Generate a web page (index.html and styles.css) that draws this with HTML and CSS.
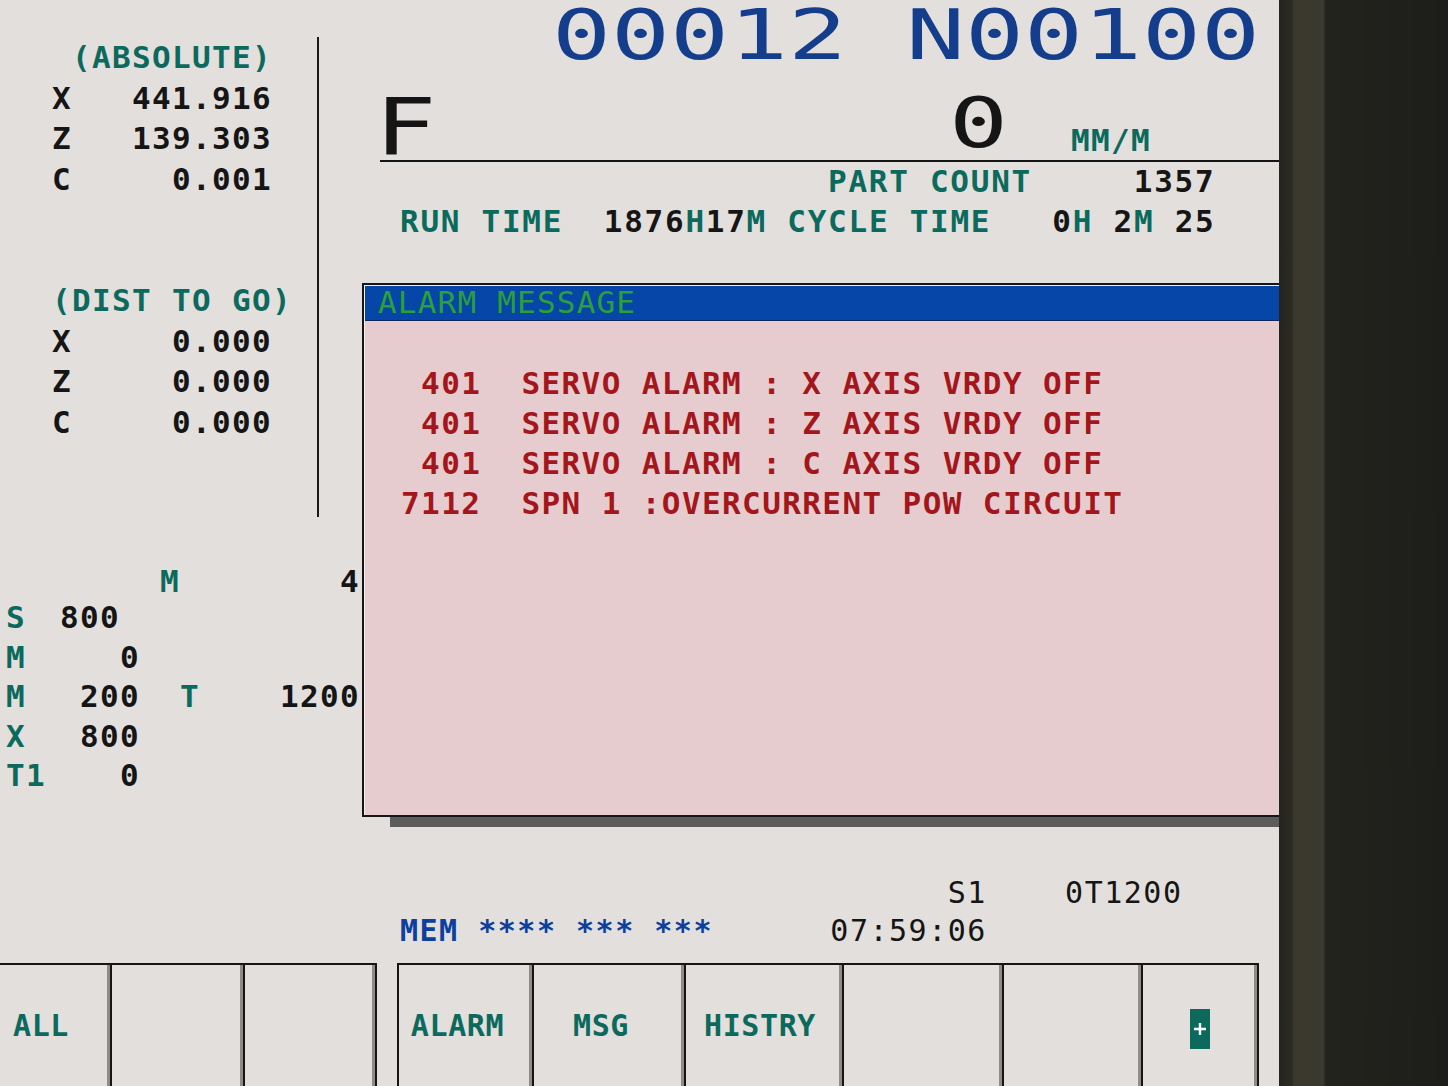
FILE: index.html
```html
<!DOCTYPE html>
<html lang="en">
  <head>
    <meta charset="UTF-8" />
    <title>CNC Alarm Message</title>
    <link rel="stylesheet" href="styles.css">
  </head>
  <body>
    <div class="monitor">
      <div class="screen">
        <div class="upper">
          <div class="left-col">
            <div class="position">
              <div class="pos-line head first"> (ABSOLUTE)</div>
              <div class="pos-line">X   441.916</div>
              <div class="pos-line">Z   139.303</div>
              <div class="pos-line">C     0.001</div>
              <div class="pos-line"> </div>
              <div class="pos-line"> </div>
              <div class="pos-line head">(DIST TO GO)</div>
              <div class="pos-line">X     0.000</div>
              <div class="pos-line">Z     0.000</div>
              <div class="pos-line">C     0.000</div>
            </div>

            <div class="modal">
              <div class="modal-row first"><span class="lbl"></span>     <span class="t">M</span>        4</div>
              <div class="modal-row"><span class="lbl">S</span>800</div>
              <div class="modal-row"><span class="lbl">M</span>   0</div>
              <div class="modal-row"><span class="lbl">M</span> 200  <span class="t">T</span>    1200</div>
              <div class="modal-row"><span class="lbl">X</span> 800</div>
              <div class="modal-row"><span class="lbl">T1</span>   0</div>
            </div>
          </div>

          <div class="right-col">
            <div class="prog"><span class="big">00012 N00100</span></div>

            <div class="feed">
              <div class="feed-f"><span>F</span></div>
              <div class="feed-val"><span class="big dark">0</span></div>
              <div class="feed-unit">MM/M</div>
            </div>

            <div class="counters">
              <div class="count-line">                     <span class="t">PART COUNT</span>     1357</div>
              <div class="count-line"><span class="t">RUN TIME</span>  1876<span class="t">H</span>17<span class="t">M</span> <span class="t">CYCLE TIME</span>   0<span class="t">H</span> 2<span class="t">M</span> 25</div>
            </div>

            <div class="alarm">
              <div class="alarm-inner">
                <div class="alarm-title">ALARM MESSAGE</div>
                <div class="alarm-body">
                  <div class="alarm-line"> 401  SERVO ALARM : X AXIS VRDY OFF</div>
                  <div class="alarm-line"> 401  SERVO ALARM : Z AXIS VRDY OFF</div>
                  <div class="alarm-line"> 401  SERVO ALARM : C AXIS VRDY OFF</div>
                  <div class="alarm-line">7112  SPN 1 :OVERCURRENT POW CIRCUIT</div>
                </div>
              </div>
            </div>
          </div>
        </div>

        <div class="status">
          <div class="status-line">                            S1    0T1200</div>
          <div class="status-line"><span class="mem">MEM **** *** ***</span>      07:59:06</div>
        </div>

        <div class="softkeys">
          <div class="key key-first" style="width: 112px">ALL</div>
          <div class="key" style="width: 133px"></div>
          <div class="key" style="width: 132px"></div>
          <div class="key key-gap" style="width: 137px">ALARM</div>
          <div class="key" style="width: 152px">MSG</div>
          <div class="key key-wide" style="width: 158px">HISTRY</div>
          <div class="key" style="width: 160px"></div>
          <div class="key" style="width: 139px"></div>
          <div class="key key-more" style="width: 116px">
            <span class="plus">
              <svg width="20" height="40" viewBox="0 0 20 40">
                <rect x="0" y="0" width="20" height="40" fill="#0b6a5c"/>
                <path d="M10 14 V26 M4 20 H16" stroke="#ffffff" stroke-width="2.4"/>
              </svg>
            </span>
          </div>
        </div>
      </div>
      <div class="bezel"></div>
    </div>
  </body>
</html>
```

FILE: styles.css
```css
body {
  margin: 0;
  padding: 0;
  background: #1f201b;
  font-family: "DejaVu Sans Mono", "Liberation Mono", monospace;
  color: #151515;
}
.monitor {
  display: flex;
  width: 1448px;
  height: 1086px;
  overflow: hidden;
}
.screen {
  width: 1279px;
  height: 1086px;
  flex: none;
  background: #e2dfdc;
  overflow: hidden;
  display: flex;
  flex-direction: column;
}
.bezel {
  flex: 1;
  background: linear-gradient(to right, #25251f 0, #2b2b24 13px, #3b392e 15px, #3a392f 44px, #22231d 47px, #1d1e19 100%);
}
.t {
  color: #0b6a5d;
}

/* upper area */
.upper {
  height: 826px;
  flex: none;
  display: flex;
}
.left-col {
  width: 362px;
  flex: none;
}
.right-col {
  flex: 1;
  min-width: 0;
}

/* position display */
.position {
  width: 319px;
  box-sizing: border-box;
  margin-top: 45px;
  padding: 0 0 75px 52px;
  border-right: 2px solid #1a1a1a;
}
.pos-line {
  white-space: pre;
  font-size: 31px;
  font-weight: bold;
  letter-spacing: 1.34px;
  line-height: 40.5px;
  height: 40.5px;
}
.pos-line.first {
  margin-top: -8px;
}
.pos-line.head {
  color: #0b6a5d;
}

/* modal info */
.modal {
  margin-top: 47px;
}
.modal-row {
  white-space: pre;
  font-size: 31px;
  font-weight: bold;
  letter-spacing: 1.34px;
  line-height: 39.5px;
  height: 39.5px;
}
.modal-row.first {
  line-height: 34px;
  height: 34px;
}
.modal-row .lbl {
  display: inline-block;
  width: 60px;
  padding-left: 6px;
  box-sizing: border-box;
  color: #0b6a5d;
}

/* program number */
.prog {
  height: 66px;
  box-sizing: border-box;
  padding: 4px 0 0 190px;
}
.big {
  display: inline-block;
  font-size: 70px;
  line-height: 62px;
  color: #143d8c;
  transform: scaleX(1.4);
  transform-origin: left center;
  white-space: pre;
}
.big.dark {
  color: #151515;
  line-height: 70px;
}

/* feed row */
.feed {
  margin-left: 18px;
  height: 96px;
  box-sizing: border-box;
  border-bottom: 2px solid #151515;
  display: grid;
  grid-template-columns: 569px 121px 1fr;
  align-items: end;
}
.feed-f span {
  display: inline-block;
  margin-left: -4px;
  margin-bottom: -6px;
  font-family: "DejaVu Sans", sans-serif;
  font-size: 78px;
  line-height: 78px;
  transform: scaleX(1.35);
  transform-origin: left center;
}
.feed-val {
  margin-bottom: 2px;
}
.feed-unit {
  margin-left: 1px;
  margin-bottom: 4px;
  font-size: 31px;
  font-weight: bold;
  line-height: 31px;
  letter-spacing: 1.34px;
  color: #0b6a5d;
}

/* counters */
.counters {
  padding-left: 38px;
}
.count-line {
  white-space: pre;
  font-size: 31px;
  font-weight: bold;
  letter-spacing: 1.72px;
  line-height: 39.5px;
}

/* alarm window */
.alarm {
  margin-top: 42px;
  width: 950px;
  height: 534px;
  box-sizing: border-box;
  border: 2px solid #161616;
  background: #e6cccf;
  box-shadow: 28px 10px 0 #5c5c5c;
}
.alarm-inner {
  height: 100%;
  border-top: 1px solid #f3eef0;
  border-left: 1px solid #f3eef0;
  box-sizing: border-box;
}
.alarm-title {
  height: 35px;
  box-sizing: border-box;
  background: #0546a8;
  border-bottom: 1px solid #10285c;
  padding-left: 13px;
  font-size: 31px;
  line-height: 32px;
  letter-spacing: 1.2px;
  color: #2a9f3a;
}
.alarm-body {
  padding: 42px 0 0 36px;
}
.alarm-line {
  white-space: pre;
  font-size: 31px;
  font-weight: bold;
  letter-spacing: 1.4px;
  line-height: 40px;
  color: #a3161b;
}

/* status */
.status {
  height: 137px;
  flex: none;
  box-sizing: border-box;
  padding: 47px 0 0 400px;
}
.status-line {
  white-space: pre;
  font-size: 30px;
  letter-spacing: 1.5px;
  line-height: 40px;
}
.status-line + .status-line {
  line-height: 36px;
}
.mem {
  color: #0c3f9e;
  font-weight: bold;
}

/* soft keys */
.softkeys {
  height: 123px;
  flex: none;
  display: flex;
}
.key {
  flex: none;
  height: 123px;
  box-sizing: border-box;
  border-top: 2px solid #151515;
  border-right: 2px solid #151515;
  box-shadow: inset -3px 0 0 #8e8b88;
  display: flex;
  align-items: center;
  justify-content: center;
  padding-right: 16px;
  font-size: 30px;
  font-weight: bold;
  letter-spacing: 0.6px;
  color: #0b6a5d;
}
.key-first {
  justify-content: flex-start;
  padding-left: 13px;
}
.key-gap {
  margin-left: 20px;
  border-left: 2px solid #151515;
}
.key-wide {
  padding-right: 8px;
}
.key-more {
  padding-right: 0;
}
.plus {
  display: flex;
  margin-top: 6px;
}
```
